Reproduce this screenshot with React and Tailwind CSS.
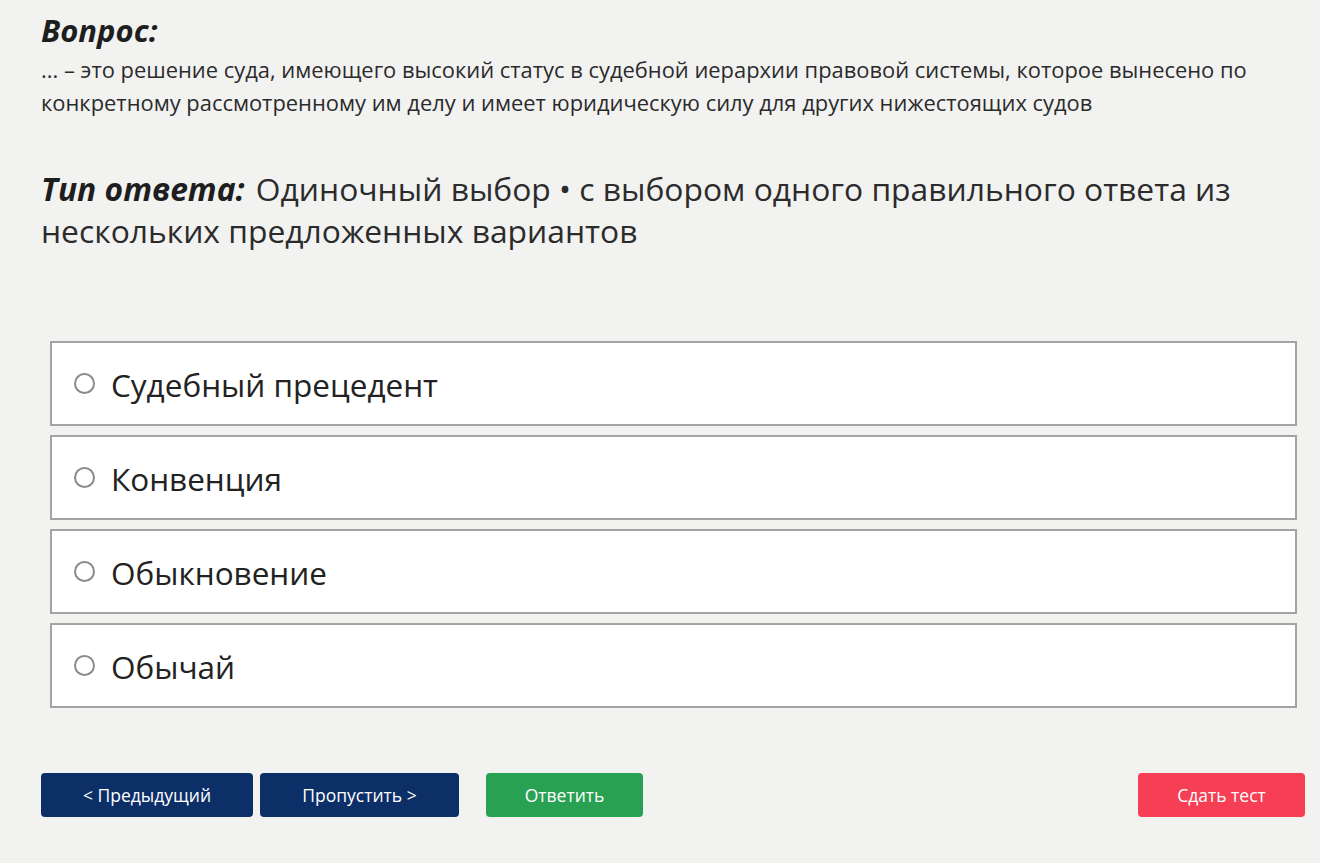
export default function App() {
  const options = ["Судебный прецедент", "Конвенция", "Обыкновение", "Обычай"];
  return (
    <div className="min-h-[863px] w-full bg-[#f2f2f1] text-[#222] px-[41px] pt-[8px]" style={{ fontFamily: '"Open Sans", "Noto Sans", sans-serif' }}>
      <h1 className="text-[31px] font-bold italic leading-[44px] text-[#1e1e1e]">Вопрос:</h1>
      <p className="text-[21.9px] leading-[33px] text-[#2b2b2b] mt-[1px] pr-[20px]">
        ... – это решение суда, имеющего высокий статус в судебной иерархии правовой системы, которое вынесено по конкретному рассмотренному им делу и имеет юридическую силу для других нижестоящих судов
      </p>
      <p className="mt-[49px] text-[31.8px] leading-[42px] text-[#2b2b2b] pr-[20px]">
        <span className="font-bold italic text-[#1e1e1e] pr-[3px]">Тип ответа:</span> Одиночный выбор • с выбором одного правильного ответа из нескольких предложенных вариантов
      </p>
      <div className="mt-[89px] ml-[9px] mr-[-18px] flex flex-col gap-[9px]">
        {options.map((o) => (
          <label key={o} className="flex items-center h-[85px] bg-white border-2 border-[#a3a3a3] pl-[22px] cursor-pointer">
            <span className="w-[21px] h-[21px] rounded-full border-2 border-[#8a8a8a] bg-white shrink-0" />
            <span className="ml-[16px] text-[31.5px] text-[#222] leading-none pt-[3px]">{o}</span>
          </label>
        ))}
      </div>
      <div className="mt-[65px] flex items-center mr-[-26px]">
        <button className="w-[212px] h-[44px] rounded-[4px] bg-[#0d2f68] text-white text-[17.5px]">&lt; Предыдущий</button>
        <button className="ml-[7px] w-[199px] h-[44px] rounded-[4px] bg-[#0d2f68] text-white text-[17.5px]">Пропустить &gt;</button>
        <button className="ml-[27px] w-[157px] h-[44px] rounded-[4px] bg-[#28a152] text-white text-[17.5px]">Ответить</button>
        <button className="ml-auto w-[167px] h-[44px] rounded-[4px] bg-[#f63e54] text-white text-[17.5px]">Сдать тест</button>
      </div>
    </div>
  );
}
